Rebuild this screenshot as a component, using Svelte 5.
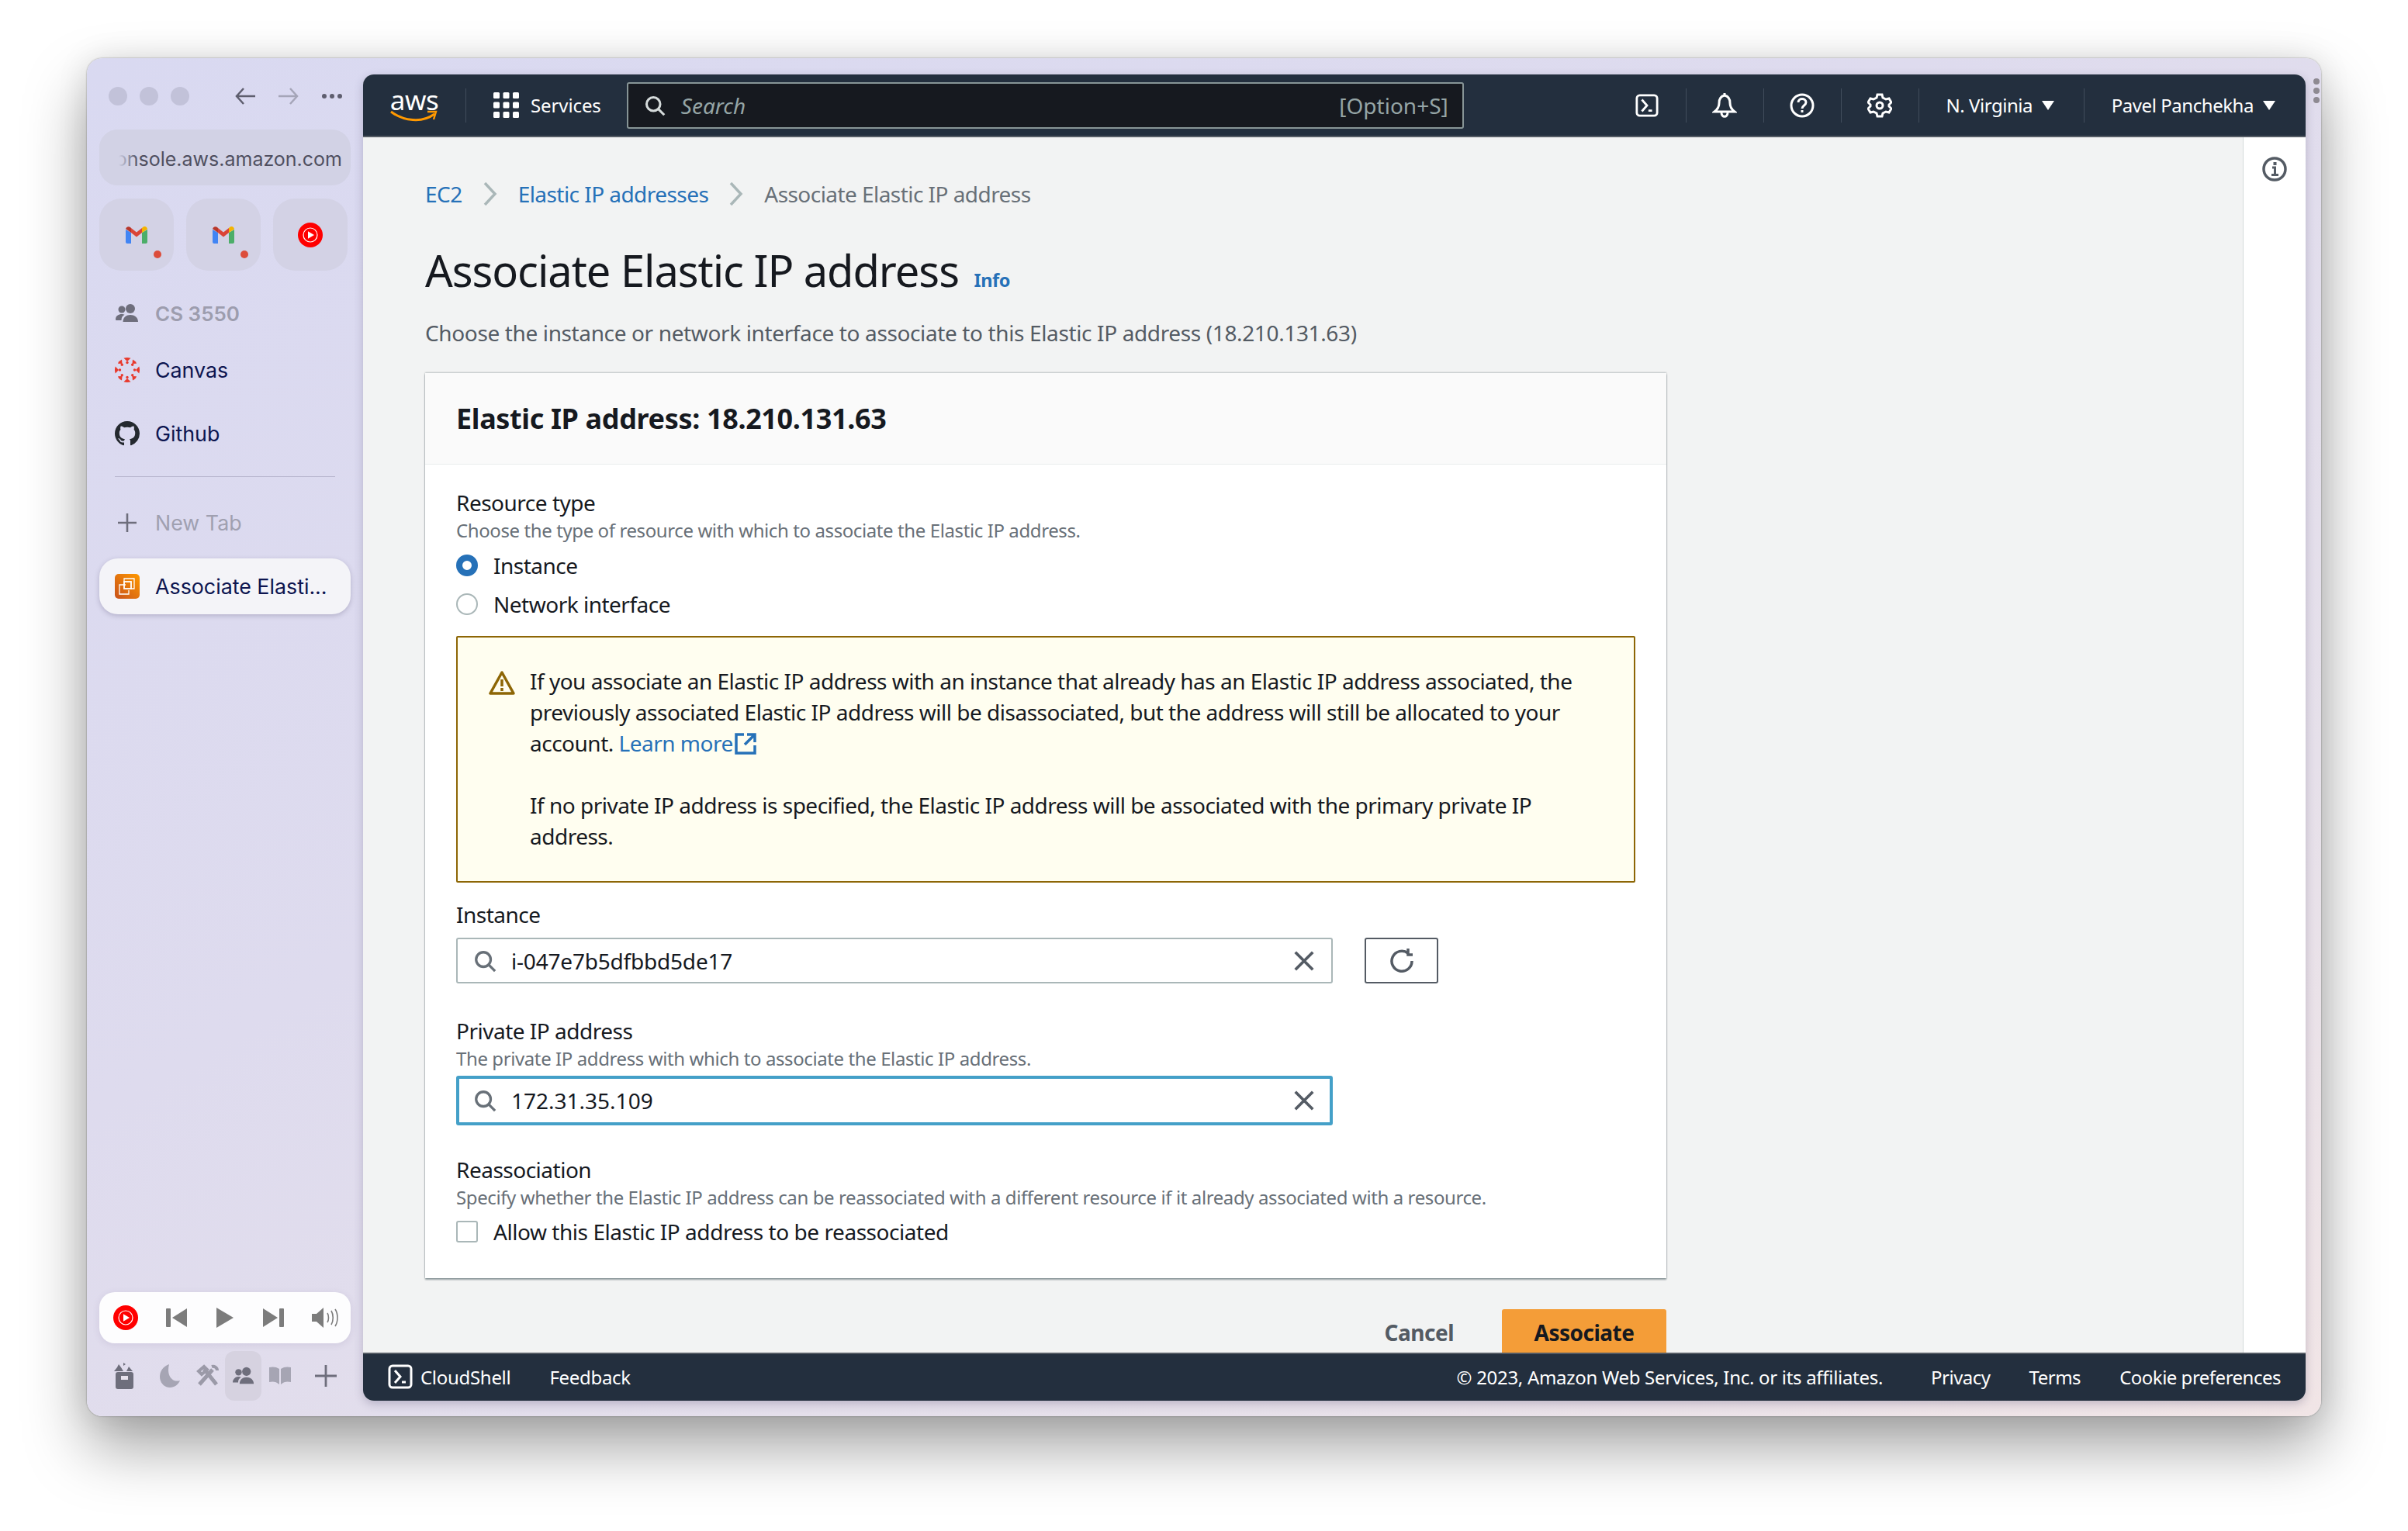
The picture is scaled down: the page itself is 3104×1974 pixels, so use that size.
<script>
	const pinned = [{ kind: 'gmail' }, { kind: 'gmail' }, { kind: 'yt' }];
	const rightLinks = ['Privacy', 'Terms', 'Cookie preferences'];
	const canvasDots = [0, 45, 90, 135, 180, 225, 270, 315];
</script>

{#snippet yt(size)}
	<svg class="yt" width={size} height={size} viewBox="0 0 32 32">
		<circle cx="16" cy="16" r="16" fill="#f00" />
		<circle cx="16" cy="16" r="9" fill="none" stroke="#fff" stroke-width="1.2" />
		<path d="M13 11.3 21 16l-8 4.7z" fill="#fff" />
	</svg>
{/snippet}

{#snippet gmail()}
	<svg width="28" height="22" viewBox="0 0 28 22">
		<path d="M0 4v16a2 2 0 0 0 2 2h5V8z" fill="#4285f4" />
		<path d="M28 4v16a2 2 0 0 1-2 2h-5V8z" fill="#34a853" opacity=".85" />
		<path d="M7 8 14 13.500 21 8V2l-7 5.500L7 2z" fill="#db4437" />
		<path d="M0 4c0-3 3.500-5 6-3l1 1v6L0 3z" fill="#b8372b" />
		<path d="M21 2l1-1c2.500-2 6-.5 6 3v-.5L21 8z" fill="#f4b400" />
	</svg>
{/snippet}

{#snippet shell(size, color)}
	<svg width={size} height={size} viewBox="0 0 32 32" fill="none" stroke={color} stroke-width="3">
		<rect x="2" y="2" width="28" height="28" rx="4" />
		<path d="M9 8l7 8-7 8" />
		<path d="M18 23h5" />
	</svg>
{/snippet}

{#snippet glass(color)}
	<svg width="32" height="32" viewBox="0 0 32 32" fill="none" stroke={color} stroke-width="3.500">
		<circle cx="14" cy="14" r="10" />
		<path d="M21 21l9 9" />
	</svg>
{/snippet}

{#snippet cross()}
	<svg width="32" height="32" viewBox="0 0 32 32" fill="none" stroke="#545b64" stroke-width="4">
		<path d="M4 4l24 24M28 4 4 28" />
	</svg>
{/snippet}

<div class="page">
	<div class="window">
		<aside class="side">
			<div class="top">
				<div class="lights"><i></i><i></i><i></i></div>
				<svg class="arrow" width="26" height="22" viewBox="0 0 26 22" fill="none" stroke="#5e5e6e" stroke-width="2.500">
					<path d="M26 11H2M11 1 2 11l9 10" />
				</svg>
				<svg class="arrow fwd" width="26" height="22" viewBox="0 0 26 22" fill="none" stroke="#a5a5b8" stroke-width="2.500">
					<path d="M0 11h24M15 1l9 10-9 10" />
				</svg>
				<svg class="more" width="26" height="6" viewBox="0 0 26 6" fill="#5e5e6e">
					<circle cx="3" cy="3" r="3" /><circle cx="13" cy="3" r="3" /><circle cx="23" cy="3" r="3" />
				</svg>
			</div>
			<div class="url"><span>console.aws.amazon.com</span></div>
			<div class="pins">
				{#each pinned as pin}
					<div class="pin">
						{#if pin.kind === 'gmail'}
							{@render gmail()}
							<b class="badge"></b>
						{:else}
							{@render yt(32)}
						{/if}
					</div>
				{/each}
			</div>
			<div class="row group">
				<span class="ico">
					<svg width="30" height="24" viewBox="0 0 30 24" fill="#6e6e7c">
						<circle cx="8" cy="7" r="4.500" /><circle cx="19" cy="6" r="6" />
						<path d="M0 20c0-5 4-7 8-7 1.500 0 2.500.3 3.500.8C8.500 15.500 7.500 18 7.500 21H1.500C.5 21 0 20.700 0 20z" />
						<path d="M9.500 23c0-6 4.500-9 9.500-9s10 3 10 9z" />
					</svg>
				</span>
				CS 3550
			</div>
			<div class="row first">
				<span class="ico">
					<svg width="32" height="32" viewBox="0 0 32 32" fill="#e8392c">
						<path d="M16 0a16 16 0 0 1 4.500 .7L16 5l-4.500-4.300A16 16 0 0 1 16 0z" />
						<path d="M16 32a16 16 0 0 0 4.500-.7L16 27l-4.500 4.300A16 16 0 0 0 16 32z" />
						<path d="M0 16a16 16 0 0 1 .7-4.500L5 16 .7 20.500A16 16 0 0 1 0 16z" />
						<path d="M32 16a16 16 0 0 0-.7-4.500L27 16l4.300 4.500A16 16 0 0 0 32 16z" />
						<path d="M5 5.500A16 16 0 0 1 9 2.400L9.500 8 4 7.800z" />
						<path d="M27 5.500a16 16 0 0 0-4-3.100L22.500 8l5.500-.2z" />
						<path d="M5 26.500a16 16 0 0 0 4 3.100l.5-5.600-5.500.2z" />
						<path d="M27 26.500a16 16 0 0 1-4 3.100L22.500 24l5.500.2z" />
						{#each canvasDots as a}
							<circle cx={16 + 9.500 * Math.cos((a * Math.PI) / 180)} cy={16 + 9.500 * Math.sin((a * Math.PI) / 180)} r="1.700" />
						{/each}
					</svg>
				</span>
				Canvas
			</div>
			<div class="row second">
				<span class="ico">
					<svg width="32" height="32" viewBox="0 0 16 16" fill="#24292f">
						<path d="M8 0C3.580 0 0 3.580 0 8c0 3.540 2.290 6.530 5.470 7.590.4.070.55-.17.55-.38 0-.19-.01-.82-.01-1.490-2.010.37-2.530-.49-2.690-.94-.09-.23-.48-.94-.82-1.130-.28-.15-.68-.52-.01-.53.630-.01 1.080.58 1.230.82.720 1.210 1.870.87 2.330.66.070-.52.28-.87.51-1.070-1.780-.2-3.640-.89-3.640-3.950 0-.87.31-1.590.82-2.150-.08-.2-.36-1.020.08-2.120 0 0 .67-.21 2.200.82.64-.18 1.320-.27 2-.27s1.360.09 2 .27c1.530-1.040 2.200-.82 2.200-.82.44 1.100.16 1.920.08 2.120.51.56.82 1.270.82 2.150 0 3.070-1.870 3.750-3.650 3.950.29.25.54.73.54 1.480 0 1.070-.01 1.930-.01 2.200 0 .21.15.46.55.38A8.013 8.013 0 0 0 16 8c0-4.420-3.580-8-8-8z" />
					</svg>
				</span>
				Github
			</div>
			<hr />
			<div class="row newtab">
				<span class="ico">
					<svg width="24" height="24" viewBox="0 0 24 24" stroke="#6e6e7c" stroke-width="2.600"><path d="M12 0v24M0 12h24" /></svg>
				</span>
				New Tab
			</div>
			<div class="row active">
				<span class="ico">
					<span class="ec2">
						<svg width="24" height="24" viewBox="0 0 24 24" fill="none" stroke="#fff" stroke-width="1.300">
							<path d="M8 6V2h13v13h-4" />
							<path d="M10 10H2v12h12v-5" />
							<rect x="8" y="6" width="9" height="9" stroke-width="1.800" />
						</svg>
					</span>
				</span>
				Associate Elasti...
			</div>
			<div class="spacer"></div>
			<div class="player">
				{@render yt(32)}
				<svg width="28" height="24" viewBox="0 0 28 24" fill="#7c7c7c"><rect width="6" height="24" rx="1" /><path d="M27 0v24L8 12z" /></svg>
				<svg width="24" height="26" viewBox="0 0 24 26" fill="#7c7c7c"><path d="M1 0l22 13L1 26z" /></svg>
				<svg width="28" height="24" viewBox="0 0 28 24" fill="#7c7c7c"><rect x="22" width="6" height="24" rx="1" /><path d="M1 0v24l19-12z" /></svg>
				<svg width="34" height="26" viewBox="0 0 34 26" fill="#7c7c7c">
					<path d="M0 8h6l9-8v26l-9-8H0z" />
					<path d="M20 7c2 3 2 9 0 12M25 4c3 5 3 13 0 18M30 2c4 6 4 16 0 22" fill="none" stroke="#7c7c7c" stroke-width="1.600" />
				</svg>
			</div>
			<div class="tools">
				<svg width="28" height="34" viewBox="0 0 28 34" fill="#6e6e7c">
					<rect x="3" y="12" width="23" height="22" rx="3" />
					<path d="M1 11l4-5 2-4 3 4 3 5zM17 11l3-6 5 6zM13 0l3 2-3 2z" />
					<rect x="10" y="17" width="9" height="5" fill="#e6e1ec" />
				</svg>
				<svg class="dim" width="26" height="30" viewBox="0 0 26 30" fill="#8e8e9c">
					<path d="M12 0C4 3 0 9 0 16c0 8 6 14 13 14 6 0 11-4 13-9-9 3-18-5-14-21z" />
				</svg>
				<svg class="dim" width="30" height="30" viewBox="0 0 30 30" fill="none" stroke="#7e7e8c" stroke-width="5">
					<path d="M4 26 21 7M10 6l16 20" /><path d="M3 9l7-6 4 4-7 6zM20 3c3-1 7 1 7 5" stroke-width="4" />
				</svg>
				<span class="sel">
					<svg width="28" height="24" viewBox="0 0 30 24" fill="#6e6e7c">
						<circle cx="8" cy="7" r="4.500" /><circle cx="19" cy="6" r="6" />
						<path d="M0 21c0-5 4-8 8-8 1.500 0 2.500.3 3.500.8C8.500 15.500 7.500 18 7.500 21z" />
						<path d="M9.500 23c0-6 4.500-9 9.500-9s10 3 10 9z" />
					</svg>
				</span>
				<svg class="dim" width="28" height="24" viewBox="0 0 28 24" fill="#8e8e9c">
					<path d="M13 3C9 0 4 0 0 1v19c4-1 9-1 13 3zM15 3c4-3 9-3 13-2v19c-4-1-9-1-13 3z" />
				</svg>
				<svg class="add" width="28" height="28" viewBox="0 0 28 28" stroke="#6e6e7c" stroke-width="2.800"><path d="M14 0v28M0 14h28" /></svg>
			</div>
		</aside>

		<div class="panel">
			<header class="nav">
				<div class="logo">
					<span>aws</span>
					<svg width="62" height="16" viewBox="0 0 62 16" fill="none" stroke="#f90" stroke-width="3">
						<path d="M1 2c16 12 40 15 56 3" /><path d="M48 2l11 0-3 10" stroke-width="2.400" />
					</svg>
				</div>
				<span class="vr"></span>
				<svg class="grid" width="33" height="33" viewBox="0 0 33 33" fill="#fff">
					{#each [0, 1, 2] as r}
						{#each [0, 1, 2] as c}
							<rect x={c * 12.500} y={r * 12.500} width="8" height="8" rx="1.500" />
						{/each}
					{/each}
				</svg>
				<span class="svc">Services</span>
				<div class="search">
					{@render glass('#d5dbdb')}
					<em>Search</em>
					<span class="hint">[Option+S]</span>
				</div>
				<div class="nav-right">
					<span class="cell">{@render shell(30, '#fff')}</span>
					<span class="cell">
						<svg width="32" height="32" viewBox="0 0 32 32" fill="none" stroke="#fff" stroke-width="3">
							<path d="M16 3c-5 1-7 5-7 10 0 5-2 8-6 11h26c-4-3-6-6-6-11 0-5-2-9-7-10z" /><path d="M12 25c0 7 8 7 8 0" /><path d="M16 0v3" />
						</svg>
					</span>
					<span class="cell">
						<svg width="32" height="32" viewBox="0 0 32 32" fill="none" stroke="#fff" stroke-width="3">
							<circle cx="16" cy="16" r="14" /><path d="M11 12c0-6 10-6 10 0 0 4-5 4-5 8" />
							<rect x="14.500" y="22" width="3" height="3" fill="#fff" stroke="none" />
						</svg>
					</span>
					<span class="cell">
						<svg width="32" height="32" viewBox="0 0 32 32" fill="none" stroke="#fff" stroke-width="3">
							<path d="M13 2h6l1 4 4 2 4-1 3 5-3 3v2l3 3-3 5-4-1-4 2-1 4h-6l-1-4-4-2-4 1-3-5 3-3v-2l-3-3 3-5 4 1 4-2z" />
							<circle cx="16" cy="16" r="4" />
						</svg>
					</span>
					<span class="cell menu region">N. Virginia <i></i></span>
					<span class="cell menu user">Pavel Panchekha <i></i></span>
				</div>
			</header>

			<div class="body">
				<main class="content">
					<nav class="crumbs">
						<a href="#ec2">EC2</a>
						<svg width="18" height="30" viewBox="0 0 18 30" fill="none" stroke="#aab7b8" stroke-width="3.500"><path d="M2 1l13 14L2 29" /></svg>
						<a href="#eip">Elastic IP addresses</a>
						<svg width="18" height="30" viewBox="0 0 18 30" fill="none" stroke="#aab7b8" stroke-width="3.500"><path d="M2 1l13 14L2 29" /></svg>
						<span>Associate Elastic IP address</span>
					</nav>
					<h1>Associate Elastic IP address <a href="#info">Info</a></h1>
					<p class="lead">Choose the instance or network interface to associate to this Elastic IP address (18.210.131.63)</p>

					<section class="card">
						<h2>Elastic IP address: 18.210.131.63</h2>
						<div class="form">
							<div class="label">Resource type</div>
							<div class="desc">Choose the type of resource with which to associate the Elastic IP address.</div>
							<div class="radio one"><i class="on"></i>Instance</div>
							<div class="radio two"><i></i>Network interface</div>

							<div class="alert">
								<svg width="34" height="32" viewBox="0 0 34 32" fill="none" stroke="#8d6605" stroke-width="3.500">
									<path d="M17 3 2 30h30z" stroke-linejoin="round" /><path d="M17 12v9M17 23v4" />
								</svg>
								<div class="alert-text">
									<p>If you associate an Elastic IP address with an instance that already has an Elastic IP address associated, the previously associated Elastic IP address will be disassociated, but the address will still be allocated to your account. <a href="#more">Learn more<svg width="28" height="28" viewBox="0 0 28 28" fill="none" stroke="#2671b8" stroke-width="3.500"><path d="M12 2H2v24h24V16" /><path d="M16 2h10v10M26 2 13 15" /></svg></a></p>
									<p>If no private IP address is specified, the Elastic IP address will be associated with the primary private IP address.</p>
								</div>
							</div>

							<div class="label inst">Instance</div>
							<div class="inrow">
								<div class="input">
									{@render glass('#687078')}
									<span class="value">i-047e7b5dfbbd5de17</span>
									{@render cross()}
								</div>
								<button class="refresh" aria-label="Refresh">
									<svg width="32" height="32" viewBox="0 0 32 32" fill="none" stroke="#545b64" stroke-width="3.500">
										<path d="M24 6a13 13 0 1 0 5 10" /><path d="M24 0v8h6" />
									</svg>
								</button>
							</div>

							<div class="label priv">Private IP address</div>
							<div class="desc">The private IP address with which to associate the Elastic IP address.</div>
							<div class="input focus">
								{@render glass('#687078')}
								<span class="value">172.31.35.109</span>
								{@render cross()}
							</div>

							<div class="label reas">Reassociation</div>
							<div class="desc">Specify whether the Elastic IP address can be reassociated with a different resource if it already associated with a resource.</div>
							<div class="check"><i></i>Allow this Elastic IP address to be reassociated</div>
						</div>
					</section>

					<div class="actions">
						<span class="cancel">Cancel</span>
						<button class="primary">Associate</button>
					</div>
				</main>
				<aside class="help">
					<svg width="32" height="32" viewBox="0 0 32 32" fill="none" stroke="#545b64" stroke-width="3.500">
						<circle cx="16" cy="16" r="14" /><path d="M13 14h3.500v9M12 23.500h9" stroke-width="3" /><rect x="14.500" y="7" width="4" height="4" fill="#545b64" stroke="none" />
					</svg>
				</aside>
			</div>

			<footer class="foot">
				{@render shell(32, '#fff')}
				<span class="cs">CloudShell</span>
				<span class="fb">Feedback</span>
				<span class="copy">© 2023, Amazon Web Services, Inc. or its affiliates.</span>
				{#each rightLinks as l}
					<span class="fl">{l}</span>
				{/each}
			</footer>
		</div>

		<div class="grip"><i></i><i></i><i></i></div>
	</div>
</div>

<style>
	:global(body) {
		margin: 0;
		background: #fff;
	}

	.page {
		box-sizing: border-box;
		width: 3104px;
		height: 1974px;
		padding: 75px 112px 0;
		overflow: hidden;
	}

	.window {
		position: relative;
		box-sizing: border-box;
		display: flex;
		width: 2880px;
		height: 1751px;
		padding: 21px 20px 20px 0;
		border-radius: 20px;
		background: linear-gradient(150deg, #d9d9f1 0%, #dedbee 40%, #e6e0ea 75%, #f1e5e6 100%);
		box-shadow: 0 0 2px rgba(0, 0, 0, 0.45), 0 40px 80px rgba(0, 0, 0, 0.36), 0 0 40px rgba(0, 0, 0, 0.1);
		font-family: Inter, sans-serif;
	}

	/* sidebar */
	.side {
		box-sizing: border-box;
		width: 356px;
		flex: none;
		display: flex;
		flex-direction: column;
		padding: 0 16px;
		font-size: 26.800px;
		color: #0d1550;
	}

	.top {
		display: flex;
		align-items: center;
		height: 56px;
	}

	.lights {
		display: flex;
		gap: 16px;
		margin-left: 12px;
	}

	.lights i {
		width: 24px;
		height: 24px;
		border-radius: 50%;
		background: #c2c2d9;
	}

	.arrow {
		margin-left: 59px;
	}

	.arrow.fwd {
		margin-left: 30px;
	}

	.more {
		margin-left: 30px;
	}

	.url {
		position: relative;
		display: flex;
		justify-content: flex-end;
		overflow: hidden;
		height: 72px;
		margin-top: 15px;
		padding: 2px 11px 0 0;
		box-sizing: border-box;
		line-height: 72px;
		font-size: 25px;
		white-space: nowrap;
		border-radius: 24px;
		background: #d2d2e5;
		color: #4f4f60;
	}

	.url span {
		flex: none;
	}

	.url::before {
		content: "";
		position: absolute;
		inset: 0 auto 0 0;
		width: 50px;
		background: linear-gradient(90deg, #d2d2e5 50%, rgba(210, 210, 229, 0));
	}

	.pins {
		display: flex;
		gap: 16px;
		margin-top: 17px;
	}

	.pin {
		position: relative;
		display: flex;
		align-items: center;
		justify-content: center;
		width: 96px;
		height: 93px;
		border-radius: 28px;
		background: #d3d2e5;
	}

	.badge {
		position: absolute;
		right: 16px;
		bottom: 16px;
		width: 10px;
		height: 10px;
		border-radius: 50%;
		background: #dc4d3b;
	}

	.row {
		display: flex;
		align-items: center;
		height: 40px;
	}

	.ico {
		display: flex;
		justify-content: center;
		width: 32px;
		margin: 0 20px 0 20px;
	}

	.group {
		margin-top: 35px;
		font-weight: 600;
		font-size: 26px;
		color: #9d9dae;
	}

	.first {
		margin-top: 33px;
	}

	.second {
		margin-top: 42px;
	}

	hr {
		width: 284px;
		margin: 35px 0 0 20px;
		border: 0;
		border-top: 1px solid #b9b7cf;
	}

	.newtab {
		margin-top: 39px;
		color: #a0a0b0;
	}

	.active {
		height: 72px;
		margin-top: 26px;
		border-radius: 24px;
		background: #f4f4f8;
		box-shadow: 0 2px 6px rgba(60, 50, 90, 0.25);
	}

	.ec2 {
		display: flex;
		align-items: center;
		justify-content: center;
		width: 32px;
		height: 32px;
		border-radius: 5px;
		background: linear-gradient(45deg, #c8511b, #f90);
	}

	.spacer {
		flex: 1;
	}

	.player {
		display: flex;
		align-items: center;
		justify-content: space-between;
		height: 66px;
		padding: 0 16px 0 18px;
		border-radius: 20px;
		background: #fdfdfe;
		box-shadow: 0 2px 10px rgba(90, 70, 120, 0.12);
	}

	.tools {
		display: flex;
		align-items: center;
		height: 64px;
		margin-top: 10px;
		padding-left: 18px;
	}

	.tools .dim {
		opacity: 0.7;
	}

	.tools > svg:nth-child(2) {
		margin-left: 32px;
	}

	.tools > svg:nth-child(3) {
		margin-left: 21px;
	}

	.sel {
		display: flex;
		align-items: center;
		justify-content: center;
		width: 47px;
		height: 64px;
		margin-left: 7px;
		border-radius: 12px;
		background: #d6d2e0;
	}

	.tools > svg:nth-child(5) {
		margin-left: 10px;
	}

	.add {
		margin-left: 31px;
	}

	/* aws console */
	.panel {
		flex: 1;
		display: flex;
		flex-direction: column;
		min-width: 0;
		overflow: hidden;
		border-radius: 14px;
		background: #f2f3f3;
		box-shadow: 0 4px 12px rgba(60, 50, 90, 0.25);
		font-family: "Noto Sans", sans-serif;
		color: #16191f;
	}

	.nav {
		box-sizing: border-box;
		flex: none;
		display: flex;
		align-items: center;
		height: 81px;
		padding-left: 34px;
		border-bottom: 2px solid #545b64;
		background: #232f3e;
		color: #fff;
		font-size: 24px;
	}

	.logo {
		display: flex;
		flex-direction: column;
		align-items: center;
		width: 64px;
	}

	.logo span {
		font-size: 35px;
		line-height: 30px;
		letter-spacing: -0.5px;
	}

	.logo svg {
		margin-top: -2px;
	}

	.vr {
		width: 1px;
		height: 44px;
		margin-left: 34px;
		background: #414d5c;
	}

	.grid {
		margin-left: 35px;
	}

	.svc {
		margin-left: 15px;
		letter-spacing: -0.1px;
	}

	.search {
		box-sizing: border-box;
		display: flex;
		align-items: center;
		width: 1079px;
		height: 60px;
		margin-left: 33px;
		padding: 0 18px 0 20px;
		border: 2px solid #879596;
		border-radius: 3px;
		background: #16191f;
		color: #95a5a6;
		font-size: 28px;
	}

	.search svg {
		flex: none;
		width: 28px;
		height: 28px;
	}

	.search em {
		margin-left: 20px;
	}

	.hint {
		margin-left: auto;
	}

	.nav-right {
		flex: 1;
		display: flex;
		align-items: center;
		padding-left: 187px;
		height: 100%;
	}

	.cell {
		box-sizing: border-box;
		display: flex;
		align-items: center;
		justify-content: center;
		width: 100px;
		height: 44px;
		border-right: 1px solid #414d5c;
		white-space: nowrap;
	}

	.menu {
		letter-spacing: -0.45px;
	}

	.menu i {
		width: 0;
		height: 0;
		margin-left: 12px;
		border: 8px solid transparent;
		border-top: 12px solid #fff;
		border-bottom: 0;
	}

	.region {
		width: 213px;
		padding-right: 3px;
	}

	.user {
		width: auto;
		padding-left: 35px;
		border: 0;
	}

	.body {
		flex: 1;
		display: flex;
		min-height: 0;
	}

	.content {
		flex: 1;
		box-sizing: border-box;
		min-width: 0;
		padding: 0 0 0 80px;
	}

	.help {
		box-sizing: border-box;
		flex: none;
		width: 81px;
		padding: 25px 0 0 24px;
		border-left: 1px solid #d5dbdb;
		background: #fff;
	}

	a {
		color: #2671b8;
		text-decoration: none;
	}

	.crumbs {
		display: flex;
		align-items: center;
		height: 40px;
		margin-top: 53px;
		font-size: 28px;
		letter-spacing: -0.55px;
		color: #687078;
	}

	.crumbs svg {
		margin: 0 27px;
	}

	h1 {
		margin: 43px 0 0;
		font-size: 56px;
		line-height: 70px;
		font-weight: 400;
		letter-spacing: -1.05px;
	}

	h1 a {
		margin-left: 6px;
		font-size: 23.500px;
		font-weight: 700;
		letter-spacing: -0.4px;
	}

	.lead {
		margin: 13px 0 0;
		font-size: 28px;
		line-height: 40px;
		letter-spacing: -0.37px;
		color: #545b64;
	}

	.card {
		width: 1600px;
		height: 1167px;
		box-sizing: border-box;
		margin-top: 32px;
		background: #fff;
		box-shadow: 0 2px 2px rgba(0, 28, 36, 0.4), 0 -1px 2px rgba(0, 28, 36, 0.15), 0 0 2px rgba(0, 28, 36, 0.2);
	}

	h2 {
		box-sizing: border-box;
		height: 118px;
		margin: 0;
		padding: 37px 40px 0;
		font-size: 36px;
		line-height: 44px;
		font-weight: 700;
		letter-spacing: -0.36px;
		background: #fafafa;
		border-bottom: 1px solid #eaeded;
	}

	.form {
		padding: 29px 40px 0;
		font-size: 28px;
		letter-spacing: -0.5px;
	}

	.label {
		line-height: 40px;
	}

	.desc {
		font-size: 24px;
		line-height: 32px;
		letter-spacing: -0.4px;
		color: #687078;
	}

	.radio {
		display: flex;
		align-items: center;
		height: 40px;
	}

	.radio.one {
		margin-top: 9px;
	}

	.radio.two {
		margin-top: 10px;
	}

	.radio i {
		box-sizing: border-box;
		width: 28px;
		height: 28px;
		margin-right: 20px;
		border: 2px solid #aab7b8;
		border-radius: 50%;
	}

	.radio i.on {
		border: 8px solid #2671b8;
	}

	.alert {
		box-sizing: border-box;
		display: flex;
		gap: 19px;
		height: 318px;
		margin-top: 21px;
		padding: 36px 40px 0 40px;
		border: 2px solid #8d6605;
		border-radius: 2px;
		background: #fffef0;
		letter-spacing: -0.5px;
	}

	.alert > svg {
		flex: none;
		margin-top: 6px;
	}

	.alert-text {
		line-height: 40px;
	}

	.alert-text p {
		margin: 0 0 40px;
	}

	.alert-text svg {
		vertical-align: -4px;
		margin-left: 2px;
	}

	.inst {
		margin-top: 21px;
	}

	.inrow {
		display: flex;
		gap: 41px;
		margin-top: 10px;
	}

	.input {
		box-sizing: border-box;
		display: flex;
		align-items: center;
		width: 1130px;
		height: 59px;
		padding: 0 20px;
		border: 2px solid #aab7b8;
		border-radius: 3px;
		background: #fff;
	}

	.input svg {
		flex: none;
		width: 30px;
		height: 30px;
	}

	.value {
		flex: 1;
		margin-left: 19px;
		letter-spacing: -0.2px;
	}

	.focus .value {
		letter-spacing: 0;
	}

	.input.focus {
		height: 64px;
		margin-top: 6px;
		padding: 0 18px;
		border: 4px solid #44a0c8;
	}

	.refresh {
		box-sizing: border-box;
		display: flex;
		align-items: center;
		justify-content: center;
		width: 95px;
		height: 59px;
		padding: 0;
		border: 2px solid #545b64;
		border-radius: 3px;
		background: #fff;
	}

	.priv {
		margin-top: 41px;
	}

	.reas {
		margin-top: 37px;
	}

	.check {
		display: flex;
		align-items: center;
		height: 40px;
		margin-top: 8px;
		letter-spacing: -0.45px;
	}

	.check i {
		box-sizing: border-box;
		width: 28px;
		height: 28px;
		margin-right: 20px;
		border: 2px solid #aab7b8;
		border-radius: 3px;
	}

	.actions {
		display: flex;
		justify-content: flex-end;
		align-items: center;
		width: 1600px;
		margin-top: 40px;
		font-weight: 700;
		font-size: 28px;
		letter-spacing: -0.5px;
	}

	.cancel {
		margin-right: 62px;
		color: #545b64;
	}

	.primary {
		width: 212px;
		height: 60px;
		padding: 0;
		border: 0;
		border-radius: 3px;
		background: #f49d38;
		color: #16191f;
		font: inherit;
		letter-spacing: -0.5px;
	}

	.foot {
		box-sizing: border-box;
		flex: none;
		display: flex;
		align-items: center;
		height: 62px;
		padding: 0 32px 2px;
		border-top: 2px solid #545b64;
		background: #232f3e;
		color: #fff;
		font-size: 24px;
		letter-spacing: -0.3px;
	}

	.cs {
		margin-left: 10px;
	}

	.fb {
		margin-left: 50px;
	}

	.copy {
		margin-left: auto;
		margin-right: 12px;
	}

	.fl {
		margin-left: 50px;
		letter-spacing: -0.5px;
	}

	.grip {
		position: absolute;
		top: 8px;
		right: 2px;
		display: flex;
		flex-direction: column;
		gap: 4px;
		margin-top: 18px;
	}

	.grip i {
		width: 8px;
		height: 8px;
		border-radius: 50%;
		background: #8e8a92;
	}
</style>
